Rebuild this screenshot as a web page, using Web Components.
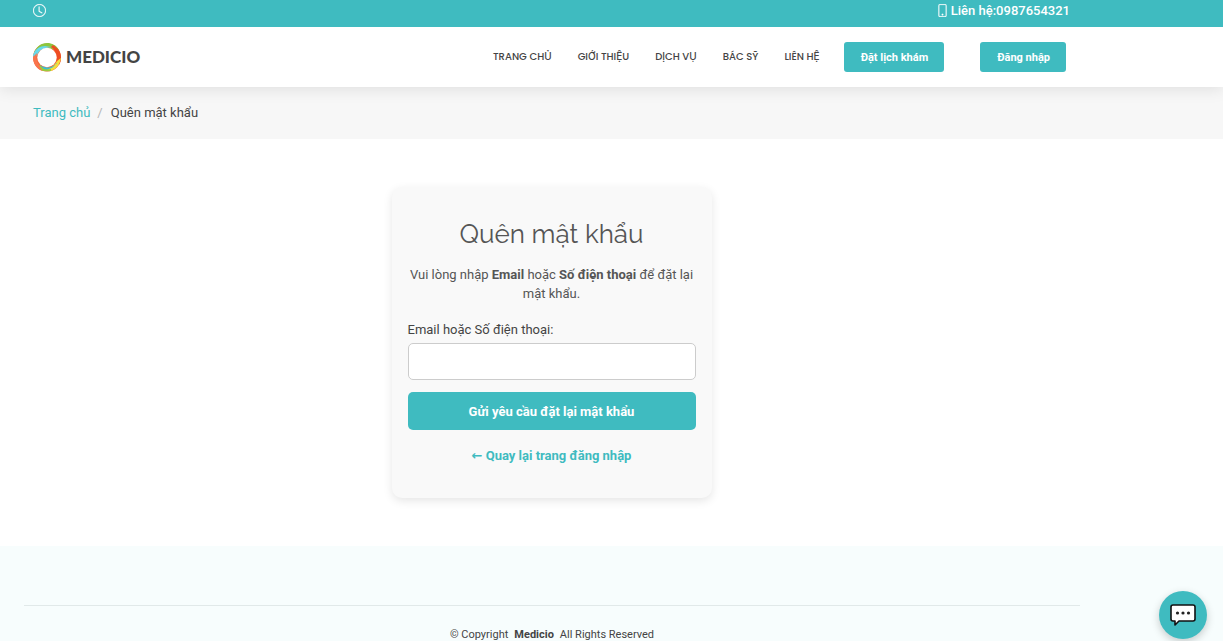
<!DOCTYPE html>
<html lang="vi">
<head>
<meta charset="utf-8">
<meta name="viewport" content="width=device-width, initial-scale=1">
<title>Medicio - Quên mật khẩu</title>
<style>
  :root {
    --accent: #3fbbc0;
    --text: #444444;
    --inset-start: 33px;
    --inset-end: 153px;
  }
  body {
    margin: 0;
    background: #ffffff;
    color: var(--text);
    font-family: Roboto, "Liberation Sans", sans-serif;
    font-size: 13px;
    line-height: 19px;
  }
</style>
</head>
<body>
<medicio-page>
  <top-bar slot="header" phone="0987654321"></top-bar>
  <site-header slot="header">
    <nav-link href="#trang-chu">TRANG CHỦ</nav-link>
    <nav-link href="#gioi-thieu">GIỚI THIỆU</nav-link>
    <nav-link href="#dich-vu">DỊCH VỤ</nav-link>
    <nav-link href="#bac-sy">BÁC SỸ</nav-link>
    <nav-link href="#lien-he">LIÊN HỆ</nav-link>
    <header-button slot="action">Đặt lịch khám</header-button>
    <header-button slot="action">Đăng nhập</header-button>
  </site-header>
  <bread-crumbs slot="header" current="Quên mật khẩu">Trang chủ</bread-crumbs>
  <forgot-card>
    <span slot="title">Quên mật khẩu</span>
    <span slot="intro">Vui lòng nhập <b>Email</b> hoặc <b>Số điện thoại</b> để đặt lại mật khẩu.</span>
  </forgot-card>
  <site-footer slot="footer" brand="Medicio"></site-footer>
</medicio-page>
<chat-button></chat-button>

<script>
class Base extends HTMLElement {
  constructor() {
    super();
    this.attachShadow({ mode: "open" });
  }
  connectedCallback() {
    this.shadowRoot.innerHTML = "<style>*{box-sizing:border-box}" + this.styles() + "</style>" + this.markup();
  }
}

customElements.define("medicio-page", class extends Base {
  styles() {
    return `:host{display:flex;flex-direction:column;min-height:100vh}
      main{display:flex;justify-content:center;padding:48px 120px 48px 0}`;
  }
  markup() {
    return `<slot name="header"></slot><main><slot></slot></main><slot name="footer"></slot>`;
  }
});

customElements.define("top-bar", class extends Base {
  styles() {
    return `:host{display:flex;justify-content:space-between;align-items:center;background:var(--accent);color:#fff;
        padding:1px var(--inset-end) 7px var(--inset-start);font-weight:500;position:relative;z-index:2}
      span{display:flex;align-items:center;gap:2px}
      svg{display:block;fill:currentColor;stroke:currentColor;stroke-width:.3}`;
  }
  markup() {
    return `<span><svg width="13" height="13" viewBox="0 0 16 16" aria-hidden="true">
        <path d="M8 3.5a.5.5 0 0 0-1 0V9a.5.5 0 0 0 .252.434l3.5 2a.5.5 0 0 0 .496-.868L8 8.71z"/>
        <path d="M8 16A8 8 0 1 0 8 0a8 8 0 0 0 0 16m7-8A7 7 0 1 1 1 8a7 7 0 0 1 14 0"/></svg></span>
      <span><svg width="13" height="13" viewBox="0 0 16 16" aria-hidden="true">
        <path d="M11 1a1 1 0 0 1 1 1v12a1 1 0 0 1-1 1H5a1 1 0 0 1-1-1V2a1 1 0 0 1 1-1zM5 0a2 2 0 0 0-2 2v12a2 2 0 0 0 2 2h6a2 2 0 0 0 2-2V2a2 2 0 0 0-2-2z"/>
        <path d="M8 14a1 1 0 1 0 0-2 1 1 0 0 0 0 2"/></svg>Liên hệ:${this.getAttribute("phone")}</span>`;
  }
});

customElements.define("site-header", class extends Base {
  styles() {
    return `:host{display:flex;align-items:center;justify-content:space-between;background:#fff;position:relative;z-index:1;
        min-height:60px;padding:0 157px 0 var(--inset-start);box-shadow:0 2px 15px rgba(0,0,0,.1)}
      .logo{display:flex;align-items:center;gap:4px;text-decoration:none;color:#444;
        font:900 17px/28px Lato,"Liberation Sans",sans-serif}
      svg{display:block}
      .right{display:flex;align-items:center;gap:24px}
      nav{display:flex;gap:26px}
      .actions{display:flex;gap:36px}`;
  }
  markup() {
    return `<a class="logo" href="#trang-chu"><svg width="29" height="29" viewBox="0 0 29 29" aria-hidden="true">
        <circle cx="14" cy="14.5" r="11.5" fill="none" stroke="#f4683a" stroke-width="5"/>
        <path d="M1 10C3 4 8 0 14 0c5 0 9 2 12 7l-7-1C13 3 8 4 4 9z" fill="#8cc63f"/>
        <path d="M0 12C2 6 7 3 12 3l6 1C12 5 7 6 4 12l-3 4z" fill="#67d9ea"/>
        <path d="M20 2c5 3 8 7 8 13 0 3-1 5-2 7l-3-4c1-6 0-11-5-14z" fill="#ee4d22"/>
        <path d="M28 15c-1 6-4 11-10 13l-5-2c6-1 9-4 11-8z" fill="#f2df3c"/>
        <path d="M18 28c-6 1-11 0-14-5l3-1c2 3 6 5 11 4z" fill="#9bcb3c"/>
        <path d="M23 20c-2 5-7 7-12 6l-4-4c5 3 11 4 17-2z" fill="#38bfd4"/>
        <path d="M0 14c0 7 4 12 9 14l-3-6C3 18 3 14 4 10z" fill="#fa744c"/>
        <circle cx="14" cy="14.500" r="9.700" fill="#fff"/></svg><span>MEDICIO</span></a>
      <div class="right"><nav><slot></slot></nav><div class="actions"><slot name="action"></slot></div></div>`;
  }
});

customElements.define("nav-link", class extends Base {
  styles() {
    return `:host{display:block}
      a{display:block;color:var(--text);text-decoration:none;white-space:nowrap;
        font:500 10px/16px Poppins,Inter,"Liberation Sans",sans-serif}`;
  }
  markup() { return `<a href="${this.getAttribute("href")}"><slot></slot></a>`; }
});

customElements.define("header-button", class extends Base {
  styles() {
    return `:host{display:block}
      button{display:block;border:0;border-radius:3px;background:var(--accent);color:#fff;cursor:pointer;white-space:nowrap;
        padding:8px 16px 6px 17px;font:700 11px/16px Roboto,"Liberation Sans",sans-serif}`;
  }
  markup() { return `<button type="button"><slot></slot></button>`; }
});

customElements.define("bread-crumbs", class extends Base {
  styles() {
    return `:host{display:block;background:#f7f7f7;padding:16px var(--inset-end) 17px var(--inset-start)}
      ol{display:flex;gap:7px;list-style:none;margin:0;padding:0}
      li{display:flex;gap:8px}
      li+li::before{content:"/";color:#b5b5b5}
      a{color:var(--accent);text-decoration:none}`;
  }
  markup() {
    return `<nav aria-label="Breadcrumb"><ol><li><a href="#trang-chu"><slot></slot></a></li>
      <li aria-current="page">${this.getAttribute("current")}</li></ol></nav>`;
  }
});

customElements.define("forgot-card", class extends Base {
  styles() {
    return `:host{display:block;width:100%;max-width:320px;box-sizing:border-box;background:#f9f9f9;border-radius:10px;
        padding:32px 16px 33px;box-shadow:0 3px 10px rgba(0,0,0,.1)}
      h2{margin:0 0 15px;text-align:center;color:#555;font:400 26px/31px Raleway,Lato,"Liberation Sans",sans-serif}
      p{margin:0 0 17px;text-align:center;color:#555}
      form{display:flex;flex-direction:column}
      label{margin-bottom:4px}
      input{width:100%;height:37px;padding:8px;border:1px solid #ccc;border-radius:5px;background:#fff;font:inherit;margin:0 0 12px}
      button{height:38px;border:0;border-radius:5px;background:var(--accent);color:#fff;cursor:pointer;
        font:700 13px/19px Roboto,"Liberation Sans",sans-serif}
      .back{display:block;margin-top:16px;text-align:center}
      a{color:var(--accent);text-decoration:none;font-weight:700;font-family:Roboto,"DejaVu Sans",sans-serif}`;
  }
  markup() {
    return `<h2><slot name="title"></slot></h2><p><slot name="intro"></slot></p>
      <form><label for="account">Email hoặc Số điện thoại:</label><input id="account" type="text">
      <button type="button">Gửi yêu cầu đặt lại mật khẩu</button></form>
      <div class="back"><a href="#dang-nhap">← Quay lại trang đăng nhập</a></div>`;
  }
});

customElements.define("site-footer", class extends Base {
  styles() {
    return `:host{display:block;flex:1;background:#f7fdfd;padding:59px 143px 0 24px}
      div{border-top:1px solid #e1e9e9;padding-top:21px;display:flex;justify-content:center;gap:6px;font-size:11px;line-height:16px}`;
  }
  markup() {
    return `<div><span>© Copyright</span><strong>${this.getAttribute("brand")}</strong><span>All Rights Reserved</span></div>`;
  }
});

customElements.define("chat-button", class extends Base {
  styles() {
    return `:host{display:block;position:fixed;right:16px;bottom:2px;z-index:3}
      button{display:flex;align-items:center;justify-content:center;width:48px;height:48px;border:0;border-radius:50%;padding:0;
        background:var(--accent);box-shadow:0 3px 8px rgba(0,0,0,.2);cursor:pointer}`;
  }
  markup() {
    return `<button type="button" aria-label="Chat"><svg width="26" height="22" viewBox="0 0 26 22" aria-hidden="true">
      <path d="M3 1h20q2 0 2 2v12q0 2-2 2H9l-4 4v-4H3q-2 0-2-2V3q0-2 2-2z" fill="#fff" stroke="#111" stroke-width="1.600" stroke-linejoin="round"/>
      <g fill="#222"><circle cx="7.500" cy="9" r="1.600"/><circle cx="13" cy="9" r="1.600"/><circle cx="18.500" cy="9" r="1.600"/></g></svg></button>`;
  }
});
</script>
</body>
</html>
